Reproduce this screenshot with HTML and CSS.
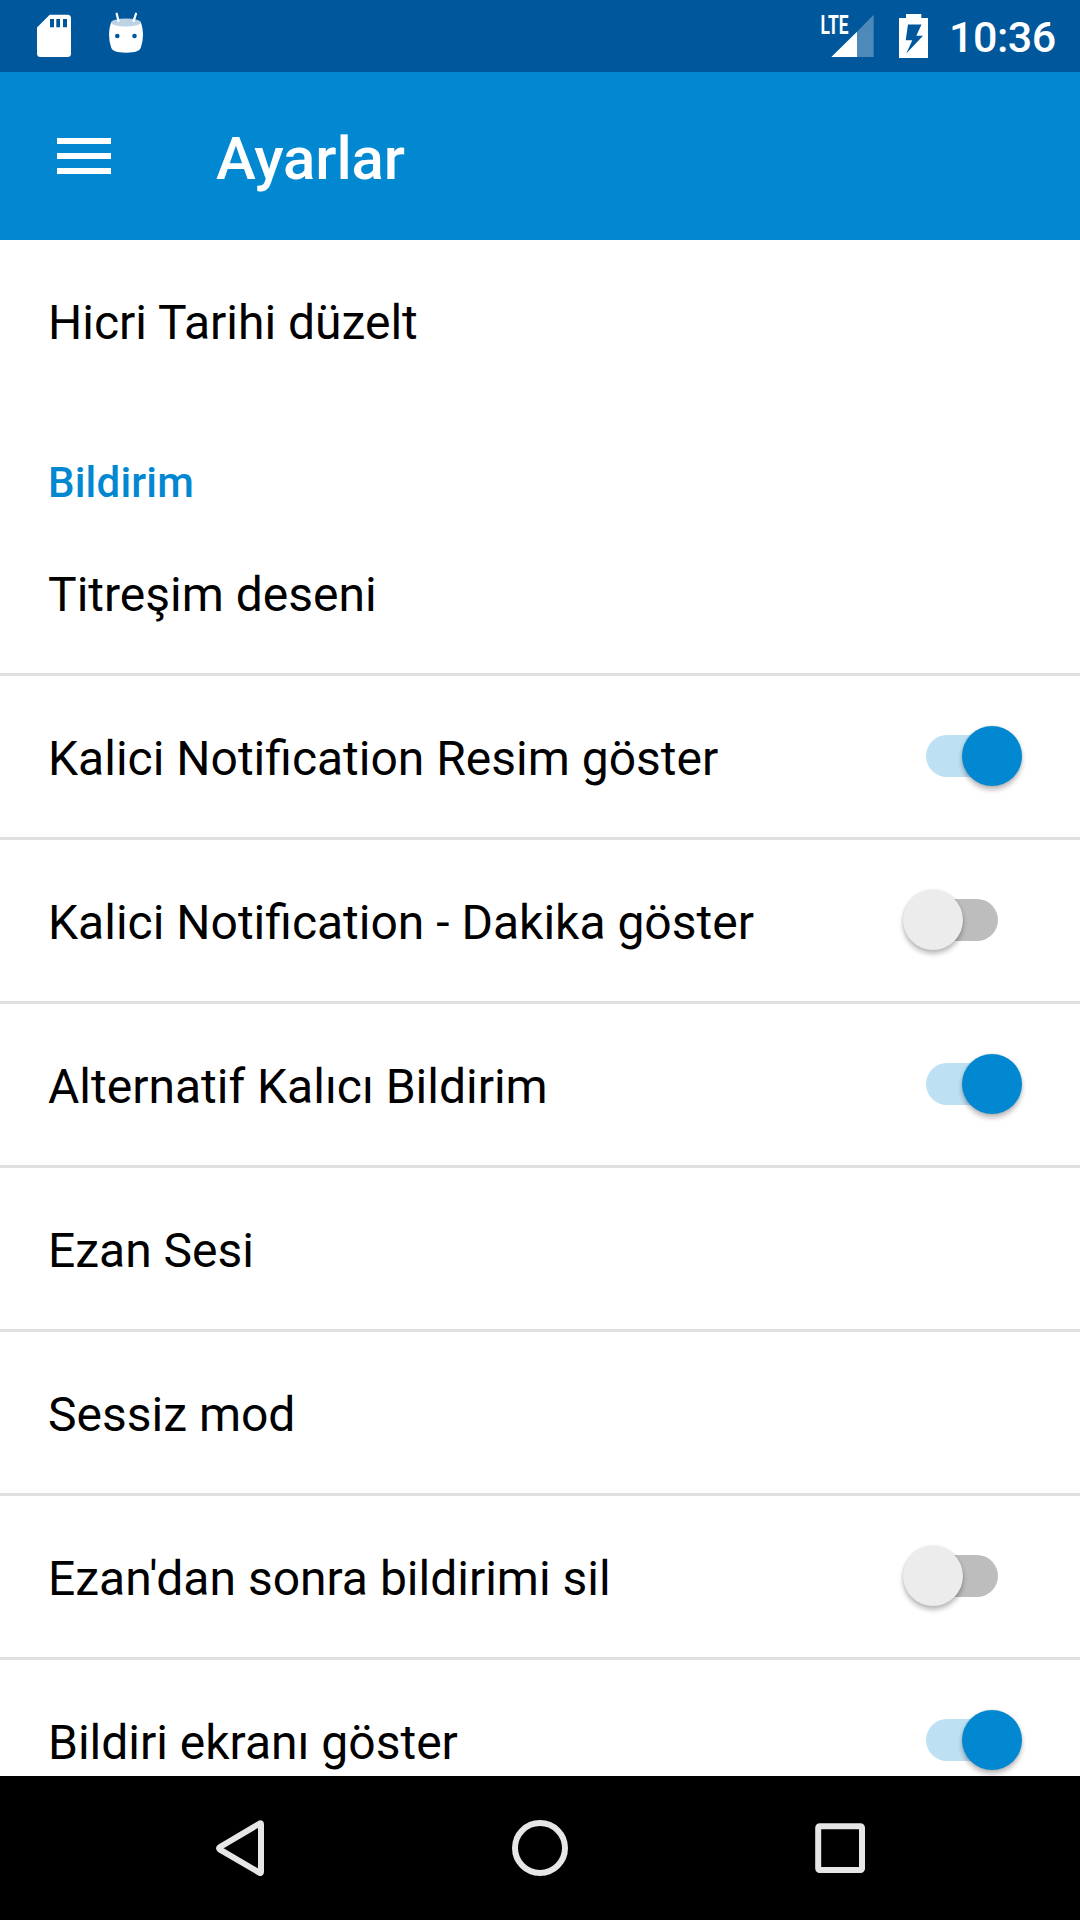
FILE: index.html
```html
<!DOCTYPE html>
<html lang="tr">
<head>
<meta charset="utf-8">
<title>Ayarlar</title>
<link rel="stylesheet" href="styles.css">
</head>
<body>
<div class="screen">
  <header class="status-bar">
    <svg class="status-icons" width="108" height="72" viewBox="36 0 108 72">
      <path fill="#fff" fill-rule="evenodd" d="M49.700 14.700H67.500Q71 14.700 71 18.200V53.500Q71 57 67.500 57H40.500Q37 57 37 53.500V27.400ZM50 19V27.300H54V19ZM56.300 19V27.300H60V19ZM63 19V27.300H67V19Z"/>
      <path stroke="#fff" stroke-width="2.200" stroke-linecap="round" d="M116.700 13.700L118.500 21M136 13.700L133.700 21"/>
      <path fill="#fff" d="M111 22.500Q109 28 109 34.500Q109 41 111 47Q112 52.700 126 52.700Q140 52.700 141 47Q143 41 143 34.500Q143 28 141 22.500Z"/>
      <ellipse cx="126" cy="22.500" rx="15" ry="4" fill="#bdd2e5"/>
      <path stroke="#fff" stroke-width="2.200" stroke-linecap="round" d="M118 18.700L118.500 21M134.300 18.700L133.700 21"/>
      <circle cx="117.300" cy="36" r="2.300" fill="#01579b"/>
      <circle cx="134.500" cy="36" r="2.300" fill="#01579b"/>
    </svg>
    <div class="status-right">
      <svg class="status-icons" width="110" height="72" viewBox="820 0 110 72">
        <text class="lte" x="820.500" y="33.500" textLength="28" lengthAdjust="spacingAndGlyphs">LTE</text>
        <path fill="#fff" fill-opacity=".3" d="M873.700 14.700V57H857V31.700Z"/>
        <path fill="#fff" d="M857 31.700V57H831.300Z"/>
        <path fill="#fff" fill-rule="evenodd" d="M906 14H921.300V18H928V58H899V18H906ZM908 24.500L905.700 40.300H912.300L906.300 53.500L923 35.700H916.300L921.500 24.500Z"/>
      </svg>
      <span class="clock">10:36</span>
    </div>
  </header>
  <div class="app-bar">
    <svg width="54" height="36" viewBox="0 0 54 36"><path fill="#fff" d="M0 0H54V6H0ZM0 15H54V21H0ZM0 30H54V36H0Z"/></svg>
    <h1 class="title">Ayarlar</h1>
  </div>
  <main class="settings">
    <div class="row row-last"><span class="label">Hicri Tarihi düzelt</span></div>
    <h2 class="category">Bildirim</h2>
    <div class="row"><span class="label">Titreşim deseni</span></div>
    <div class="row"><span class="label">Kalici <span lang="en">Notification</span> Resim göster</span><span class="switch on"></span></div>
    <div class="row"><span class="label">Kalici <span lang="en">Notification</span> - Dakika göster</span><span class="switch"></span></div>
    <div class="row"><span class="label">Alternatif Kalıcı Bildirim</span><span class="switch on"></span></div>
    <div class="row"><span class="label">Ezan Sesi</span></div>
    <div class="row"><span class="label">Sessiz mod</span></div>
    <div class="row"><span class="label">Ezan'dan sonra bildirimi sil</span><span class="switch"></span></div>
    <div class="row"><span class="label">Bildiri ekranı göster</span><span class="switch on"></span></div>
  </main>
  <nav class="nav-bar">
    <svg width="60" height="60" viewBox="210 1818 60 60"><path d="M259.700 1823.500Q261 1822.800 261 1824V1872Q261 1873.500 259.700 1872.800L220 1849.700Q218 1848.300 220 1847Z"/></svg>
    <svg width="60" height="60" viewBox="0 0 60 60"><circle cx="30" cy="30" r="25"/></svg>
    <svg width="60" height="60" viewBox="0 0 60 60"><rect x="8.200" y="8.200" width="43.800" height="43.800" rx="1.500"/></svg>
  </nav>
</div>
</body>
</html>
```
FILE: styles.css
```css
* { box-sizing: border-box; }

body {
  margin: 0;
  font-family: Roboto, "Noto Sans", sans-serif;
  background: #fff;
}

svg { display: block; }

.screen {
  display: flex;
  flex-direction: column;
  width: 1080px;
  height: 1920px;
  overflow: hidden;
}

.status-bar {
  flex: none;
  display: flex;
  justify-content: space-between;
  height: 72px;
  padding: 0 24px 0 36px;
  background: #01579b;
  color: #fff;
}

.status-right {
  display: flex;
  gap: 19px;
}

.lte {
  font-size: 26px;
  font-weight: 700;
  fill: #fff;
}

.clock {
  width: 107px;
  font-size: 43px;
  font-weight: 500;
  line-height: 75px;
  letter-spacing: -.5px;
  white-space: nowrap;
}

.app-bar {
  flex: none;
  display: flex;
  align-items: center;
  gap: 105px;
  height: 168px;
  padding-left: 57px;
  background: #0288d1;
  color: #fff;
}

.title {
  margin: 4px 0 0;
  font-size: 60px;
  font-weight: 500;
  letter-spacing: -.1px;
}

.settings {
  flex: 1;
  min-height: 0;
  overflow: hidden;
}

.row {
  display: flex;
  align-items: center;
  justify-content: space-between;
  height: 164px;
  padding: 0 58px 0 48px;
  border-bottom: 3px solid #e0e0e0;
}

.row-last {
  height: 161px;
  border-bottom: 0;
}

.label {
  padding-top: 4px;
  font-size: 48px;
  color: #000;
}

.category {
  height: 111px;
  margin: 0;
  padding: 57px 48px 0;
  font-size: 42px;
  font-weight: 500;
  line-height: 50px;
  letter-spacing: .2px;
  color: #0288d1;
}

.switch {
  display: flex;
  align-items: center;
  width: 120px;
  height: 60px;
  margin-bottom: 1px;
  padding: 0 .5px;
}

.switch::before {
  content: "";
  order: 1;
  width: 60px;
  height: 60px;
  border-radius: 50%;
  background: #ececec;
  box-shadow: 0 4px 5px rgba(0, 0, 0, .25), 0 0 3px rgba(0, 0, 0, .12);
  z-index: 1;
}

.switch::after {
  content: "";
  order: 2;
  width: 72px;
  height: 42px;
  margin-left: -36.5px;
  border-radius: 21px;
  background: #bdbdbd;
}

.switch.on { justify-content: flex-end; }

.switch.on::before {
  order: 2;
  background: #0288d1;
}

.switch.on::after {
  order: 1;
  margin: 0 -36.5px 0 0;
  background: #bde0f3;
}

.nav-bar {
  flex: none;
  display: flex;
  align-items: center;
  justify-content: space-between;
  height: 144px;
  padding: 0 210px;
  background: #000;
}

.nav-bar svg {
  fill: none;
  stroke: #e6e6e6;
  stroke-width: 6;
  stroke-linejoin: round;
}
```
